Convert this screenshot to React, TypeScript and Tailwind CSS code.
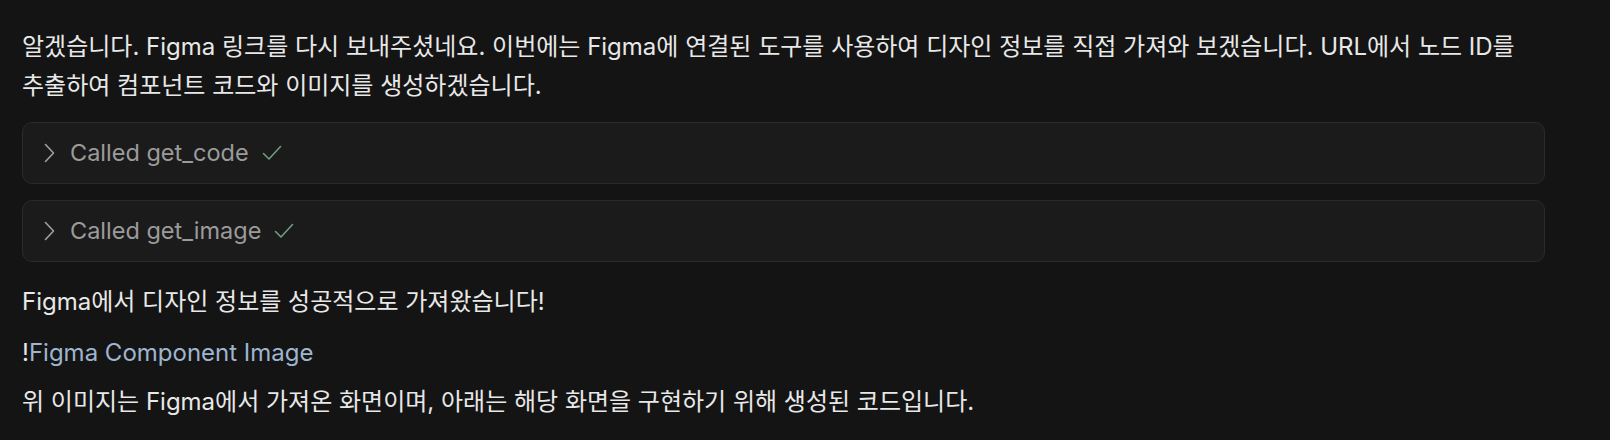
import React from "react";

type ToolCall = {
  name: string;
};

const calls: ToolCall[] = [{ name: "get_code" }, { name: "get_image" }];

function ToolCallRow({ call }: { call: ToolCall }) {
  return (
    <div className="flex h-[62px] items-center rounded-[10px] border border-[#2b2b2b] bg-[#1b1b1b] pl-[21px] text-[23.5px] text-[#9b9b9b]">
      <svg width="11" height="20" viewBox="0 0 11 20" fill="none" className="mr-[15px]">
        <path d="M1.5 1.5 L9.5 10 L1.5 18.5" stroke="#a0a0a0" strokeWidth="1.6" strokeLinecap="round" strokeLinejoin="round" />
      </svg>
      <span>Called {call.name}</span>
      <svg width="20" height="16" viewBox="0 0 20 16" fill="none" className="ml-[13px]">
        <path d="M1.5 8.5 L7 14 L18.5 1.5" stroke="#6f9c80" strokeWidth="1.6" strokeLinecap="round" strokeLinejoin="round" />
      </svg>
    </div>
  );
}

export default function App() {
  return (
    <main
      className="min-h-screen bg-[#141414] px-[22px] pt-[27px] text-[24px] text-[#e8e8e8]"
      style={{ fontFamily: 'Inter, "Noto Sans CJK KR", sans-serif' }}
    >
      <div className="w-[1523px] break-keep">
        <p className="leading-[39px]">
          알겠습니다. Figma 링크를 다시 보내주셨네요. 이번에는 Figma에 연결된 도구를 사용하여 디자인 정보를 직접 가져와 보겠습니다. URL에서 노드 ID를
          추출하여 컴포넌트 코드와 이미지를 생성하겠습니다.
        </p>

        <div className="mt-[17px] flex flex-col gap-[16px]">
          {calls.map((c) => (
            <ToolCallRow key={c.name} call={c} />
          ))}
        </div>

        <p className="mt-[20px] leading-[39px]">Figma에서 디자인 정보를 성공적으로 가져왔습니다!</p>
        <p className="mt-[12px] leading-[39px]">
          !<a className="text-[#9fb5cf]">Figma Component Image</a>
        </p>
        <p className="mt-[10px] leading-[39px]">
          위 이미지는 Figma에서 가져온 화면이며, 아래는 해당 화면을 구현하기 위해 생성된 코드입니다.
        </p>
      </div>
    </main>
  );
}
